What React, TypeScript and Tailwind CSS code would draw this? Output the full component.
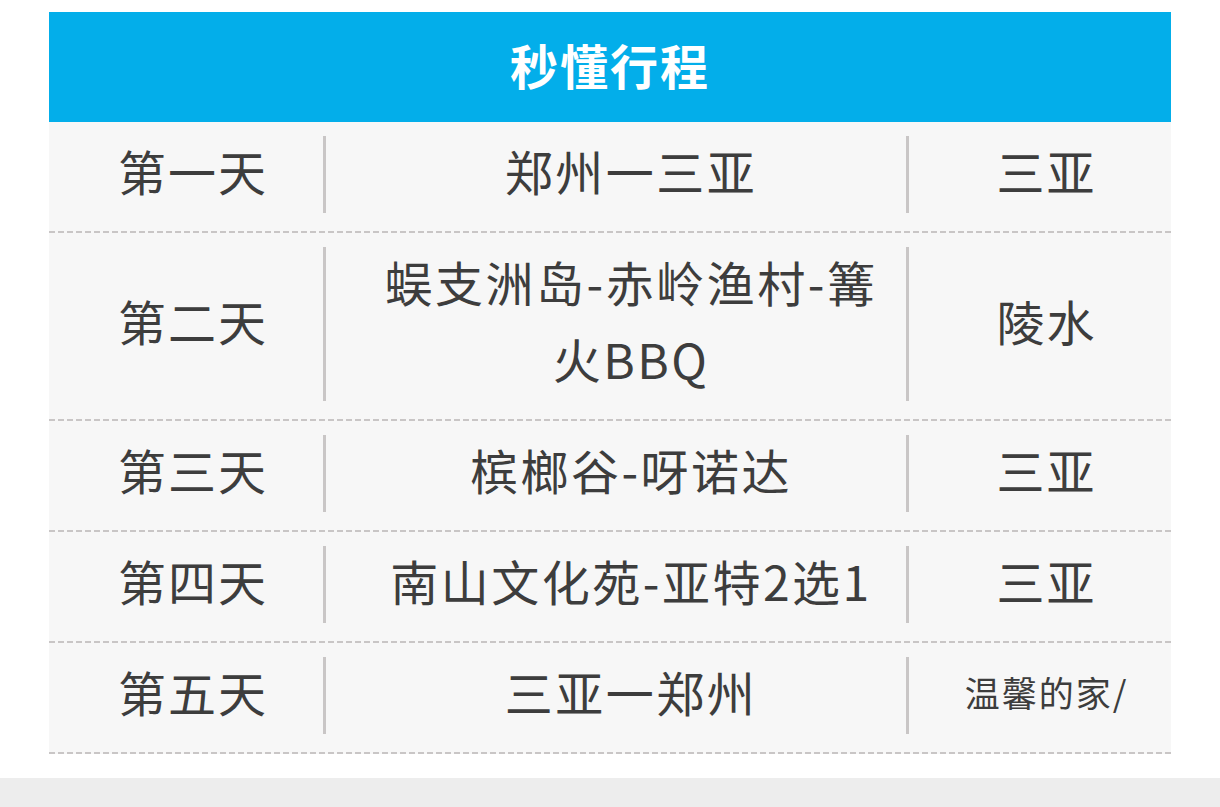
const rows: { day: string; route: string; stay: string; small?: boolean }[] = [
  { day: "第一天", route: "郑州一三亚", stay: "三亚" },
  { day: "第二天", route: "蜈支洲岛-赤岭渔村-篝火BBQ", stay: "陵水" },
  { day: "第三天", route: "槟榔谷-呀诺达", stay: "三亚" },
  { day: "第四天", route: "南山文化苑-亚特2选1", stay: "三亚" },
  { day: "第五天", route: "三亚一郑州", stay: "温馨的家/", small: true },
];

function Dashes() {
  return (
    <div className="h-[2px] w-full bg-[repeating-linear-gradient(to_right,#c9c6c6_0_6px,transparent_6px_9px)]" />
  );
}

export default function App() {
  return (
    <div className="min-h-[807px] w-full bg-white font-['Noto_Sans_CJK_SC','Noto_Sans',sans-serif] text-[#3d3d3d]">
      <div className="px-[49px] pt-[12px] pb-[24px]">
        <div className="flex h-[110px] items-center justify-center bg-[#03aeea] pb-[7px] text-[48px] font-bold tracking-[2px] text-white">
          秒懂行程
        </div>
        {rows.map((row) => (
          <div key={row.day} className="bg-[#f7f7f7]">
            <div className="grid grid-cols-[274px_583px_264px] items-stretch pt-[14px] pb-[18px] text-[48px] leading-[77px] tracking-[2px]">
              <div className="flex items-center justify-center pl-[14px]">
                <span className="-translate-y-[4px]">{row.day}</span>
              </div>
              <div className="flex items-center justify-center border-l-[3px] border-[#c9c6c6] pl-[44px] pr-[14px] text-center">
                <span className="-translate-y-[4px] tracking-[2.5px]">{row.route}</span>
              </div>
              <div className="flex items-center justify-center border-l-[3px] border-[#c9c6c6] pl-[14px]">
                <span className={row.small ? "-translate-y-[4px] text-[35px] tracking-[2px]" : "-translate-y-[4px]"}>
                  {row.stay}
                </span>
              </div>
            </div>
            <Dashes />
          </div>
        ))}
      </div>
      <div className="h-[30px] bg-[#ededed]" />
    </div>
  );
}
